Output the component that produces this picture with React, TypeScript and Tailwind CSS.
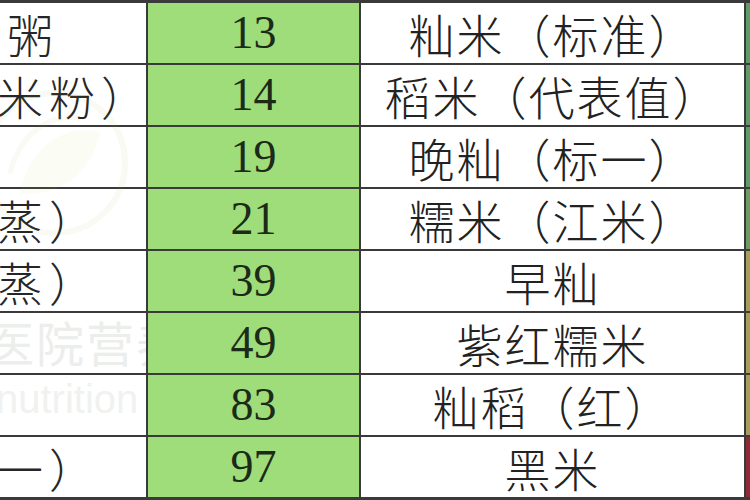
const rows = [
  { left: "籼米粥", gi: "13", name: "籼米（标准）", edge: "bg-[#5f9a6a]", pad: "pl-[20px]" },
  { left: "米粉（干米粉）", gi: "14", name: "稻米（代表值）", edge: "bg-[#5f9a6a]", pad: "" },
  { left: "", gi: "19", name: "晚籼（标一）", edge: "bg-[#5f9a6a]", pad: "" },
  { left: "米饭（蒸）", gi: "21", name: "糯米（江米）", edge: "bg-[#6f9a66]", pad: "" },
  { left: "糙米（蒸）", gi: "39", name: "早籼", edge: "bg-[#a49f5c]", pad: "" },
  { left: "", gi: "49", name: "紫红糯米", edge: "bg-[#a49f5c]", pad: "" },
  { left: "", gi: "83", name: "籼稻（红）", edge: "bg-[#a49f5c]", pad: "" },
  { left: "米饭（一）", gi: "97", name: "黑米", edge: "bg-[#8c2a3a]", pad: "" },
];

const cjk = "font-['Noto_Sans_CJK_SC','Noto_Sans_CJK_JP',sans-serif]";

const App = () => {
  return (
    <div className="relative w-[750px] h-[500px] overflow-hidden bg-white">
      <div className="flex flex-col border-t-[3px] border-[#3a3a3a]">
        {rows.map((row, i) => (
          <div
            key={i}
            className={`flex overflow-hidden border-[#3a3a3a] ${
              i === rows.length - 1 ? "h-[63px] border-b-[3px]" : "h-[62px] border-b-2"
            }`}
          >
            {/* first column, mostly cut off on the left */}
            <div
              className={`-ml-[204px] w-[352px] shrink-0 flex items-center justify-center whitespace-nowrap text-[46px] leading-none tracking-[6px] font-light text-[#262626] border-r-2 border-[#3a3a3a] ${row.pad} ${cjk}`}
            >
              {row.left}
            </div>
            <div className="w-[213px] shrink-0 flex items-center justify-center bg-[#9fdc7a] border-r-2 border-[#3a3a3a] font-['Liberation_Serif',serif] text-[46px] text-[#1c2a18] leading-none">
              {row.gi}
            </div>
            <div
              className={`w-[385px] shrink-0 flex items-center justify-center whitespace-nowrap text-[46px] leading-none tracking-[2px] font-light text-[#222] border-r-2 border-[#3a3a3a] ${cjk}`}
            >
              {row.name}
            </div>
            <div className={`flex-1 ${row.edge}`} />
          </div>
        ))}
      </div>

      {/* faint watermark over the first column */}
      <div className="absolute left-0 top-[3px] w-[146px] h-[494px] overflow-hidden pointer-events-none">
        <svg className="absolute left-[-30px] top-[70px] opacity-[0.06]" width="170" height="180" viewBox="0 0 170 180">
          <circle cx="85" cy="90" r="70" fill="none" stroke="#9ab84a" strokeWidth="6" />
          <path d="M50 120 C60 70 100 50 130 60 C120 100 90 125 50 120 Z" fill="#c9d84a" />
          <path d="M40 100 C50 60 80 40 110 45" fill="none" stroke="#8fb24a" strokeWidth="5" />
        </svg>
        <div className={`absolute left-[-14px] top-[314px] whitespace-nowrap text-[48px] leading-none tracking-[2px] text-[#eceeec] ${cjk}`}>
          医院营养
        </div>
        <div className="absolute left-[-4px] top-[376px] whitespace-nowrap text-[40px] leading-none text-[#f0f2f0] font-['Liberation_Sans',sans-serif]">
          nutrition
        </div>
      </div>
    </div>
  );
};

export default App;
